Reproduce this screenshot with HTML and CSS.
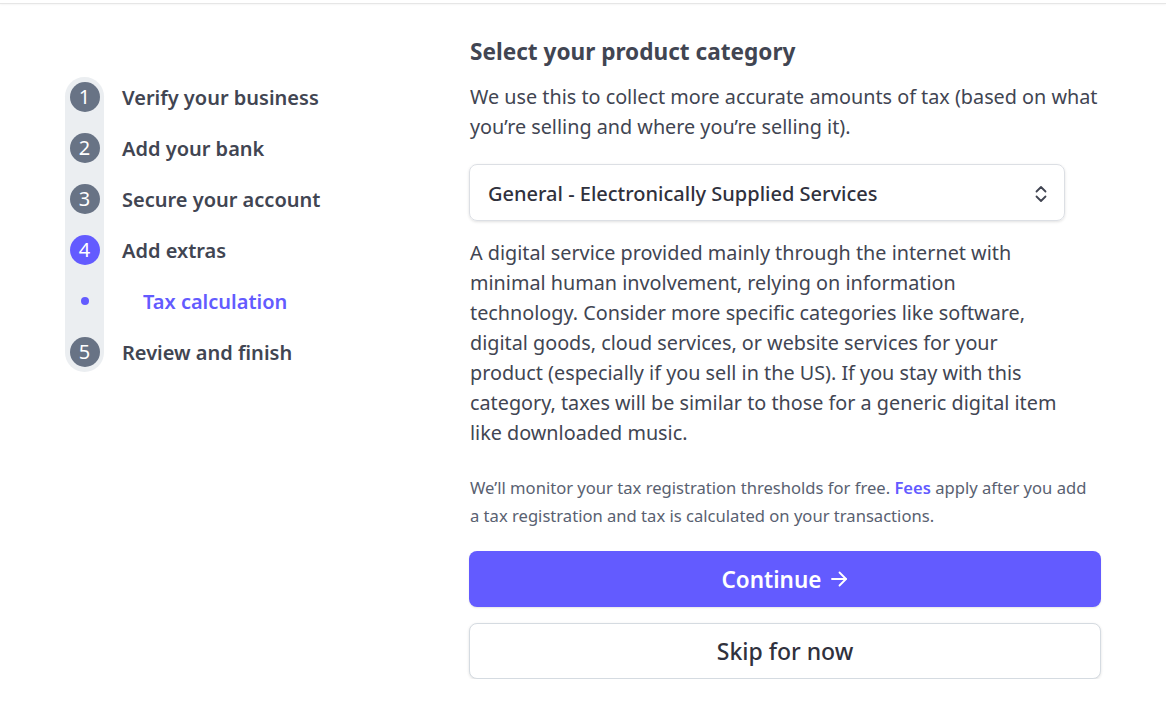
FILE: index.html
```html
<!DOCTYPE html>
<html lang="en">
<head>
<meta charset="utf-8">
<title>Tax calculation</title>
<link rel="stylesheet" href="styles.css">
</head>
<body>
<div class="topbar"></div>
<div class="page">
  <nav class="sidebar">
    <ol class="steps">
      <li class="step"><span class="marker"><span class="num">1</span></span><span class="label">Verify your business</span></li>
      <li class="step"><span class="marker"><span class="num">2</span></span><span class="label">Add your bank</span></li>
      <li class="step"><span class="marker"><span class="num">3</span></span><span class="label">Secure your account</span></li>
      <li class="step"><span class="marker"><span class="num active">4</span></span><span class="label">Add extras</span></li>
      <li class="step sub"><span class="marker"><span class="dot"></span></span><span class="label">Tax calculation</span></li>
      <li class="step"><span class="marker"><span class="num">5</span></span><span class="label">Review and finish</span></li>
    </ol>
  </nav>
  <main class="content">
    <h2 class="title">Select your product category</h2>
    <p class="intro">We use this to collect more accurate amounts of tax (based on what you’re selling and where you’re selling it).</p>
    <div class="select">
      <span class="select-value">General - Electronically Supplied Services</span>
      <svg class="chev" width="14" height="20" viewBox="0 0 14 20" fill="none" stroke="#414552" stroke-width="1.8" stroke-linecap="round" stroke-linejoin="round"><path d="M2.5 7.5 L7 3 L11.5 7.5"/><path d="M2.5 12.5 L7 17 L11.5 12.5"/></svg>
    </div>
    <p class="desc">A digital service provided mainly through the internet with minimal human involvement, relying on information technology. Consider more specific categories like software, digital goods, cloud services, or website services for your product (especially if you sell in the US). If you stay with this category, taxes will be similar to those for a generic digital item like downloaded music.</p>
    <p class="note">We’ll monitor your tax registration thresholds for free. <a class="link" href="#">Fees</a> apply after you add a tax registration and tax is calculated on your transactions.</p>
    <button class="btn primary" type="button"><span>Continue</span><svg class="arrow" width="18" height="16" viewBox="0 0 18 16" fill="none" stroke="#ffffff" stroke-width="1.8" stroke-linecap="round" stroke-linejoin="round"><path d="M2 8 H16"/><path d="M9.5 1.5 L16 8 L9.5 14.5"/></svg></button>
    <button class="btn secondary" type="button">Skip for now</button>
  </main>
</div>
</body>
</html>
```

FILE: styles.css
```css
* { box-sizing: border-box; }
html, body { margin: 0; padding: 0; background: #ffffff; }
body {
  font-family: "Noto Sans", "Open Sans", "Liberation Sans", sans-serif;
  color: #414552;
}
.topbar {
  height: 4px;
  border-bottom: 1px solid #e6e6e6;
  box-shadow: 0 1px 2px rgba(0,0,0,0.04);
}
.page {
  display: flex;
  padding-top: 33px;
}
.sidebar {
  width: 469px;
  padding-left: 65px;
  padding-top: 40px;
  flex-shrink: 0;
}
.steps {
  list-style: none;
  margin: 0;
  padding: 5px 0;
  position: relative;
  display: flex;
  flex-direction: column;
  gap: 21px;
}
.steps::before {
  content: "";
  position: absolute;
  left: 0;
  top: 0;
  bottom: 0;
  width: 39px;
  background: #ebeef1;
  border-radius: 20px;
}
.step {
  display: flex;
  align-items: center;
  height: 30px;
  position: relative;
}
.marker {
  width: 39px;
  display: flex;
  justify-content: center;
  align-items: center;
  flex-shrink: 0;
}
.num {
  width: 30px;
  height: 30px;
  border-radius: 50%;
  background: #687385;
  color: #ffffff;
  font-size: 20px;
  line-height: 30px;
  text-align: center;
}
.num.active { background: #635bff; }
.dot {
  width: 8px;
  height: 8px;
  border-radius: 50%;
  background: #635bff;
}
.label {
  margin-left: 18px;
  font-size: 20px;
  font-weight: 600;
  color: #414552;
  white-space: nowrap;
}
.step.sub .label {
  margin-left: 39px;
  color: #635bff;
}
.content {
  width: 632px;
  display: flex;
  flex-direction: column;
}
.title {
  margin: 0;
  font-size: 22.6px;
  line-height: 30px;
  font-weight: 700;
  color: #414552;
  padding-left: 1px;
}
.intro {
  margin: 15px 0 0;
  font-size: 19.8px;
  line-height: 30px;
  padding-left: 1px;
}
.select {
  margin-top: 22px;
  width: 596px;
  height: 57px;
  border: 1px solid #dcdfe4;
  border-radius: 8px;
  box-shadow: 0 1px 3px rgba(0,0,0,0.12);
  display: flex;
  align-items: center;
  justify-content: space-between;
  padding: 2px 16px 0 18px;
}
.select-value {
  font-size: 20px;
  font-weight: 500;
  color: #30313d;
}
.desc {
  margin: 17px 0 0;
  width: 591px;
  font-size: 19.8px;
  line-height: 30px;
  padding-left: 1px;
}
.note {
  margin: 26px 0 0;
  max-width: 626px;
  font-size: 16.6px;
  line-height: 28px;
  color: #596171;
  padding-left: 1px;
}
.link {
  color: #635bff;
  font-weight: 600;
  text-decoration: none;
}
.btn {
  width: 632px;
  height: 56px;
  border-radius: 8px;
  font-family: inherit;
  display: flex;
  align-items: center;
  justify-content: center;
  gap: 9px;
  cursor: pointer;
}
.primary {
  margin-top: 21px;
  background: #635bff;
  color: #ffffff;
  border: none;
  font-size: 22.5px;
  font-weight: 600;
  box-shadow: 0 1px 2px rgba(0,0,0,0.1);
}
.secondary {
  margin-top: 16px;
  background: #ffffff;
  color: #30313d;
  font-size: 23px;
  font-weight: 500;
  border: 1px solid #d5dbe1;
  box-shadow: 0 1px 3px rgba(0,0,0,0.12);
}
```
